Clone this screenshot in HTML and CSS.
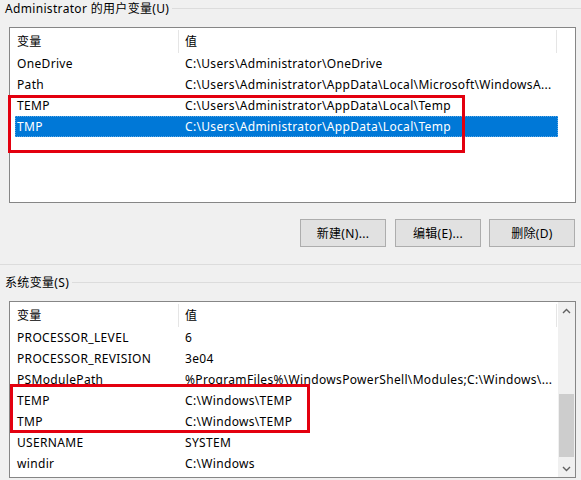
FILE: index.html
```html
<!DOCTYPE html>
<html lang="zh-CN">
<head>
<meta charset="utf-8">
<title>环境变量</title>
<link rel="stylesheet" href="styles.css">
</head>
<body>
<div class="dlg">
  <div class="ghead"><span class="t">Administrator 的用户变量(U)</span><span class="rule"></span></div>
  <div class="list user">
    <div class="pane">
      <div class="hdr"><div class="hc hc1">变量</div><div class="hc hc2">值</div></div>
      <div class="row"><div class="c1">OneDrive</div><div class="c2">C:\Users\Administrator\OneDrive</div></div>
      <div class="row"><div class="c1">Path</div><div class="c2">C:\Users\Administrator\AppData\Local\Microsoft\WindowsA...</div></div>
      <div class="row"><div class="c1">TEMP</div><div class="c2">C:\Users\Administrator\AppData\Local\Temp</div></div>
      <div class="row sel"><div class="c1">TMP</div><div class="c2">C:\Users\Administrator\AppData\Local\Temp</div></div>
    </div>
  </div>
  <div class="btns">
    <button class="btn first">新建(N)...</button>
    <button class="btn">编辑(E)...</button>
    <button class="btn">删除(D)</button>
  </div>
  <div class="sep"></div>
  <div class="ghead g2"><span class="t">系统变量(S)</span><span class="rule"></span></div>
  <div class="list sys">
    <div class="pane">
      <div class="hdr"><div class="hc hc1">变量</div><div class="hc hc2">值</div></div>
      <div class="row"><div class="c1">PROCESSOR_LEVEL</div><div class="c2">6</div></div>
      <div class="row"><div class="c1">PROCESSOR_REVISION</div><div class="c2">3e04</div></div>
      <div class="row"><div class="c1">PSModulePath</div><div class="c2">%ProgramFiles%\WindowsPowerShell\Modules;C:\Windows\...</div></div>
      <div class="row"><div class="c1">TEMP</div><div class="c2">C:\Windows\TEMP</div></div>
      <div class="row"><div class="c1">TMP</div><div class="c2">C:\Windows\TEMP</div></div>
      <div class="row"><div class="c1">USERNAME</div><div class="c2">SYSTEM</div></div>
      <div class="row"><div class="c1">windir</div><div class="c2">C:\Windows</div></div>
    </div>
    <div class="sb">
      <div class="sbb"><svg width="9" height="6" viewBox="0 0 9 6"><polyline points="1,5 4.5,1.5 8,5" fill="none" stroke="#606060" stroke-width="1.4"/></svg></div>
      <div class="track"><div class="thumb"></div></div>
      <div class="sbb"><svg width="9" height="6" viewBox="0 0 9 6"><polyline points="1,1 4.5,4.5 8,1" fill="none" stroke="#606060" stroke-width="1.4"/></svg></div>
    </div>
  </div>
  <div class="mark m1"></div>
  <div class="mark m2"></div>
</div>
</body>
</html>
```
FILE: styles.css
```css
* { box-sizing: border-box; margin: 0; padding: 0; }
html, body { background: #f0f0f0; }
body {
  width: 581px;
  height: 480px;
  overflow: hidden;
  font-family: "Noto Sans", "Noto Sans CJK SC", sans-serif;
  font-size: 12px;
  letter-spacing: 0.33px;
  color: #000;
}
.dlg { position: relative; height: 480px; }

.ghead { display: flex; align-items: center; height: 17px; padding-left: 5px; }
.ghead .t { line-height: 17px; white-space: nowrap; }
.ghead .rule { flex: 1; height: 1px; background: #dcdcdc; margin-left: 3px; }
.ghead.g2 { margin-top: 9px; }

.list {
  margin: 10px 0 0 9px;
  width: 567px;
  border: 1px solid #868686;
  background: #fff;
  display: flex;
  overflow: hidden;
}
.list.user { height: 176px; }
.list.sys { height: 177px; }
.pane { width: 548px; }

.hdr { display: flex; height: 25px; }
.hc {
  margin-top: 2px;
  height: 23px;
  line-height: 23px;
  border-right: 1px solid #e5e5e5;
  white-space: nowrap;
}
.hc1 { width: 169px; padding-left: 7px; }
.hc2 { width: 378px; padding-left: 6px; }

.row {
  display: flex;
  height: 21px;
  line-height: 21px;
  margin-left: 5px;
  width: 543px;
  white-space: nowrap;
}
.row .c1 { width: 164px; padding-left: 2px; overflow: hidden; }
.row .c2 { flex: 1; padding-left: 6px; overflow: hidden; }
.row.sel {
  background: #0078d7;
  color: #fff;
  outline: 1px dotted rgba(255, 255, 255, 0.35);
  outline-offset: -1px;
}

.sb {
  width: 17px;
  display: flex;
  flex-direction: column;
  background: #f0f0f0;
}
.sbb { height: 17px; display: flex; align-items: center; justify-content: center; }
.track { flex: 1; padding-top: 75px; }
.thumb { height: 63px; margin: 0 1px; background: #cdcdcd; }

.btns {
  display: flex;
  justify-content: flex-end;
  gap: 8px;
  margin-top: 16px;
  padding-right: 6px;
}
.btn {
  width: 86px;
  height: 28px;
  border: 1px solid #adadad;
  background: #e1e1e1;
  font: inherit;
  letter-spacing: inherit;
  color: #000;
  display: flex;
  align-items: center;
  justify-content: center;
}
.btn.first { margin-right: 1px; }

.sep { margin-top: 17px; height: 1px; background: #dcdcdc; }

.mark { position: absolute; border: 3px solid #e3000f; }
.m1 { left: 8px; top: 95px; width: 457px; height: 58px; }
.m2 { left: 10px; top: 384px; width: 300px; height: 49px; }
```
